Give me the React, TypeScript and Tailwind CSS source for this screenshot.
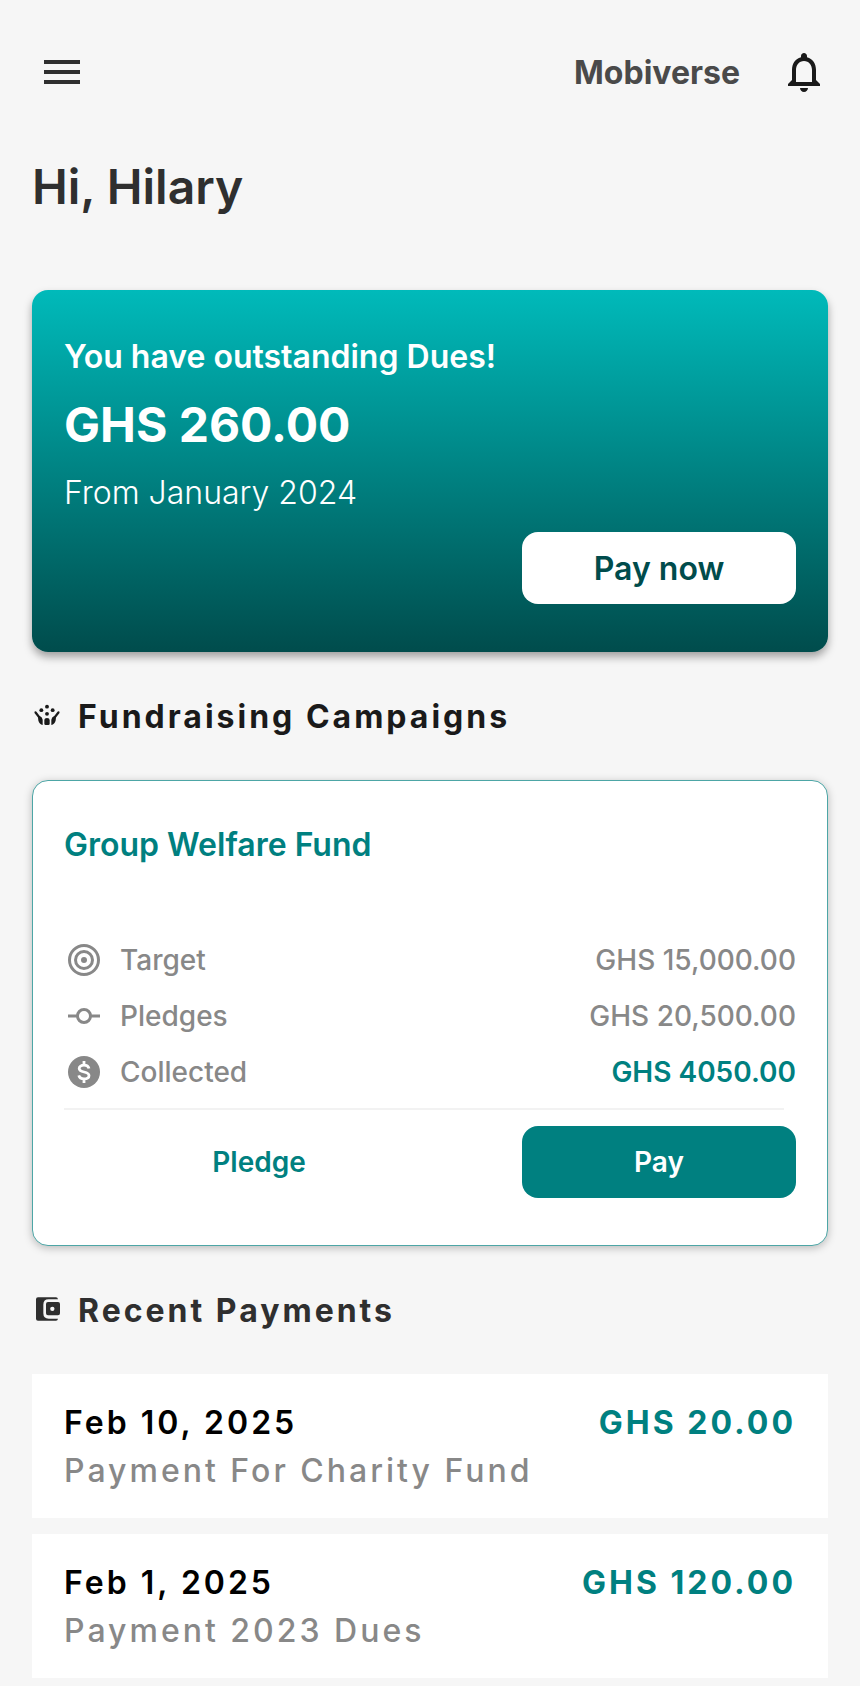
import type { ReactNode } from "react";
import { MdMenu, MdNotificationsNone } from "react-icons/md";

function CrowdIcon() {
  return (
    <svg viewBox="36 33 90 90" className="size-[30px] shrink-0" fill="currentColor" aria-hidden="true">
      <circle cx="81" cy="50" r="5.800" />
      <circle cx="64" cy="60.500" r="5.800" />
      <circle cx="98" cy="60.500" r="5.800" />
      <circle cx="81" cy="71.500" r="5.800" />
      <path d="M73 90q0-6 8-6t8 6v11q0 4-4 4h-8q-4 0-4-4z" />
      <path d="M43.500 69q-1-4 2-5q2-.5 4 1.500l9 12q9 4 9.500 12v15.500q-10-2-13-13.500l-1-9z" />
      <path d="M118.500 69q1-4-2-5q-2-.5-4 1.500l-9 12q-9 4-9.500 12v15.500q10-2 13-13.500l1-9z" />
    </svg>
  );
}

function WalletIcon() {
  return (
    <svg viewBox="36 45 90 90" className="size-[30px] shrink-0" fill="currentColor" aria-hidden="true">
      <path d="M54 52h54q5 0 6 6H86q-16 0-16 16v26q0 16 16 16h28q-1 6-6 6H54q-6 0-6-6V58q0-6 6-6z" />
      <path
        fillRule="evenodd"
        d="M84 66h30q6 0 6 6v28q0 6-6 6H84q-6 0-6-6V72q0-6 6-6zM97 80a6.500 6.500 0 1 0 0 13a6.500 6.500 0 0 0 0-13z"
      />
    </svg>
  );
}

function TargetIcon() {
  return (
    <svg viewBox="0 0 40 40" className="size-10 shrink-0" fill="none" stroke="currentColor" strokeWidth="3" aria-hidden="true">
      <circle cx="20" cy="20" r="14.500" />
      <circle cx="20" cy="20" r="8.500" />
      <circle cx="20" cy="20" r="3" fill="currentColor" stroke="none" />
    </svg>
  );
}

function CommitIcon() {
  return (
    <svg viewBox="0 0 40 40" className="size-10 shrink-0" fill="none" stroke="currentColor" strokeWidth="3" aria-hidden="true">
      <circle cx="20" cy="20" r="6.500" />
      <path d="M4 20h9.500M26.500 20H36" />
    </svg>
  );
}

function CoinIcon() {
  return (
    <svg viewBox="0 0 40 40" className="size-10 shrink-0" aria-hidden="true">
      <circle cx="20" cy="20" r="16" fill="currentColor" />
      <path
        d="M20 9v4M20 27v4M25 16.500c-.6-2.200-2.600-3.300-5-3.300c-2.800 0-4.800 1.200-4.800 3.300c0 4.800 9.800 2.200 9.800 7c0 2.200-2.100 3.400-5 3.400c-2.700 0-4.600-1.200-5.200-3.500"
        fill="none"
        stroke="#fff"
        strokeWidth="2.800"
      />
    </svg>
  );
}

function SectionTitle({ icon, children, className }: { icon: ReactNode; children: ReactNode; className: string }) {
  return (
    <div className={`my-[43px] flex items-center gap-4 ${className}`}>
      {icon}
      <h2 className="pt-0.5 text-[32px] leading-10 font-bold tracking-[3px]">{children}</h2>
    </div>
  );
}

function StatRow({ icon, label, value, strong }: { icon: ReactNode; label: string; value: string; strong?: boolean }) {
  return (
    <div className="flex h-14 items-center justify-between">
      <dt className="flex items-center gap-4">
        {icon}
        {label}
      </dt>
      <dd className={strong ? "font-semibold text-[#008080]" : ""}>{value}</dd>
    </div>
  );
}

const payments = [
  { date: "Feb 10, 2025", note: "Payment For Charity Fund", amount: "GHS 20.00" },
  { date: "Feb 1, 2025", note: "Payment 2023 Dues", amount: "GHS 120.00" },
];

export default function App() {
  return (
    <main className="min-h-screen bg-[#f6f6f6] px-8 pt-12 pb-2 font-['Inter',sans-serif] text-[#2f2f2f]">
      <header className="flex items-center justify-between pl-1.5">
        <button type="button" aria-label="Menu">
          <MdMenu className="size-12" />
        </button>
        <div className="flex items-center gap-10">
          <span className="pt-0.5 text-[32px] leading-10 font-bold text-[#4a4a4a]">Mobiverse</span>
          <button type="button" aria-label="Notifications" className="text-[#1a1a1a]">
            <MdNotificationsNone className="size-12" />
          </button>
        </div>
      </header>

      <h1 className="mt-[61px] text-[48px] leading-15 font-semibold">Hi, Hilary</h1>

      <section className="mt-[73px] flex flex-col rounded-2xl bg-linear-to-b/srgb from-[#00baba] to-[#004c4c] px-8 pt-[49px] pb-12 text-white shadow-[0_5px_8px_rgba(0,0,0,0.35)]">
        <p className="text-[32px] leading-9 font-semibold">You have outstanding Dues!</p>
        <p className="mt-5 text-[48px] leading-15 font-bold">GHS 260.00</p>
        <p className="mt-5 text-[32px] leading-9 font-light">From January 2024</p>
        <button
          type="button"
          className="mt-[21px] h-18 w-[274px] self-end rounded-2xl bg-white pt-0.5 text-[32px] leading-9 font-semibold text-[#004c4c]"
        >
          Pay now
        </button>
      </section>

      <SectionTitle icon={<CrowdIcon />} className="text-[#1a1a1a]">
        Fundraising Campaigns
      </SectionTitle>

      <section className="rounded-2xl border border-[#4da6a6] bg-white px-[31px] pt-[46px] pb-[47px] shadow-[0_2px_8px_rgba(0,0,0,0.25)]">
        <h3 className="text-[32px] leading-9 font-semibold text-[#008080]">Group Welfare Fund</h3>
        <dl className="mt-[69px] text-[28px] leading-8 font-medium text-[#888888]">
          <StatRow icon={<TargetIcon />} label="Target" value="GHS 15,000.00" />
          <StatRow icon={<CommitIcon />} label="Pledges" value="GHS 20,500.00" />
          <StatRow icon={<CoinIcon />} label="Collected" value="GHS 4050.00" strong />
        </dl>
        <hr className="mt-2 mr-3 border-t-2 border-[#f2f2f2]" />
        <div className="mt-4 flex justify-between pl-[58px] text-[28px] leading-8 font-semibold">
          <button type="button" className="h-18 w-[274px] rounded-2xl text-[#008080]">
            Pledge
          </button>
          <button type="button" className="h-18 w-[274px] rounded-2xl bg-[#008080] text-white">
            Pay
          </button>
        </div>
      </section>

      <SectionTitle icon={<WalletIcon />} className="text-[#2f2f2f]">
        Recent Payments
      </SectionTitle>

      <ul className="flex flex-col gap-4 text-[32px] leading-12 tracking-[3px]">
        {payments.map((payment) => (
          <li key={payment.date} className="flex justify-between bg-white px-8 pt-[25px] pb-[23px]">
            <div>
              <p className="font-semibold text-black">{payment.date}</p>
              <p className="font-medium text-[#888888]">{payment.note}</p>
            </div>
            <p className="font-bold text-[#008080]">{payment.amount}</p>
          </li>
        ))}
      </ul>
    </main>
  );
}
